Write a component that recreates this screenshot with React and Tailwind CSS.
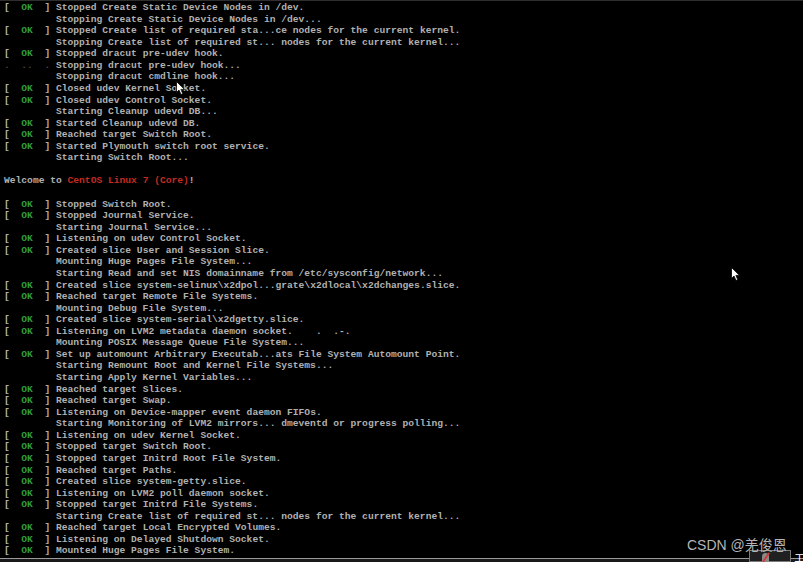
const lines = [
  { ok: true, text: "Stopped Create Static Device Nodes in /dev." },
  { text: "Stopping Create Static Device Nodes in /dev..." },
  { ok: true, text: "Stopped Create list of required sta...ce nodes for the current kernel." },
  { text: "Stopping Create list of required st... nodes for the current kernel..." },
  { ok: true, text: "Stopped dracut pre-udev hook." },
  { faded: true, text: "Stopping dracut pre-udev hook..." },
  { text: "Stopping dracut cmdline hook..." },
  { ok: true, text: "Closed udev Kernel Socket." },
  { ok: true, text: "Closed udev Control Socket." },
  { text: "Starting Cleanup udevd DB..." },
  { ok: true, text: "Started Cleanup udevd DB." },
  { ok: true, text: "Reached target Switch Root." },
  { ok: true, text: "Started Plymouth switch root service." },
  { text: "Starting Switch Root..." },
  { blank: true },
  { welcome: true },
  { blank: true },
  { ok: true, text: "Stopped Switch Root." },
  { ok: true, text: "Stopped Journal Service." },
  { text: "Starting Journal Service..." },
  { ok: true, text: "Listening on udev Control Socket." },
  { ok: true, text: "Created slice User and Session Slice." },
  { text: "Mounting Huge Pages File System..." },
  { text: "Starting Read and set NIS domainname from /etc/sysconfig/network..." },
  { ok: true, text: "Created slice system-selinux\\x2dpol...grate\\x2dlocal\\x2dchanges.slice." },
  { ok: true, text: "Reached target Remote File Systems." },
  { text: "Mounting Debug File System..." },
  { ok: true, text: "Created slice system-serial\\x2dgetty.slice." },
  { ok: true, text: "Listening on LVM2 metadata daemon socket.    .  .-." },
  { text: "Mounting POSIX Message Queue File System..." },
  { ok: true, text: "Set up automount Arbitrary Executab...ats File System Automount Point." },
  { text: "Starting Remount Root and Kernel File Systems..." },
  { text: "Starting Apply Kernel Variables..." },
  { ok: true, text: "Reached target Slices." },
  { ok: true, text: "Reached target Swap." },
  { ok: true, text: "Listening on Device-mapper event daemon FIFOs." },
  { text: "Starting Monitoring of LVM2 mirrors... dmeventd or progress polling..." },
  { ok: true, text: "Listening on udev Kernel Socket." },
  { ok: true, text: "Stopped target Switch Root." },
  { ok: true, text: "Stopped target Initrd Root File System." },
  { ok: true, text: "Reached target Paths." },
  { ok: true, text: "Created slice system-getty.slice." },
  { ok: true, text: "Listening on LVM2 poll daemon socket." },
  { ok: true, text: "Stopped target Initrd File Systems." },
  { text: "Starting Create list of required st... nodes for the current kernel..." },
  { ok: true, text: "Reached target Local Encrypted Volumes." },
  { ok: true, text: "Listening on Delayed Shutdown Socket." },
  { ok: true, text: "Mounted Huge Pages File System." },
]

function Cursor({ className }) {
  return (
    <svg className={className} width="10" height="15" viewBox="0 0 10 15">
      <path d="M0.5 0.5 L0.5 11.5 L3 9 L5 13.5 L6.8 12.7 L4.9 8.4 L8.5 8.4 Z" fill="#fff" stroke="#000" strokeWidth="0.8" />
    </svg>
  )
}

function Line({ line }) {
  if (line.blank) return <div className="h-[11.57px]" />
  if (line.welcome) {
    return (
      <div className="h-[11.57px] whitespace-pre">
        Welcome to <span className="text-[#c42a22]">CentOS Linux 7 (Core)</span>!
      </div>
    )
  }
  return (
    <div className="h-[11.57px] whitespace-pre">
      {line.ok ? (
        <>
          [  <span className="text-[#2f9e3a]">OK</span>  ] {line.text}
        </>
      ) : line.faded ? (
        <>
          <span className="opacity-40">.  ..  .</span> {line.text}
        </>
      ) : (
        <>{"         " + line.text}</>
      )}
    </div>
  )
}

export default function App() {
  return (
    <div className="w-[803px] h-[562px] bg-black relative overflow-hidden flex flex-col">
      <div className="h-[1px] bg-[#2e2e2e]" />
      <div
        className="h-[557px] pl-[4px] pt-[1px] text-[9.65px] leading-[11.57px] font-bold text-[#b0b0b0]"
        style={{ fontFamily: '"Liberation Mono", "DejaVu Sans Mono", monospace' }}
      >
        {lines.map((line, i) => (
          <Line key={i} line={line} />
        ))}
      </div>
      <div className="h-[1px] bg-[#9a9a9a]" />
      <div className="flex-1 bg-[#1a1a1a]" />

      <Cursor className="absolute left-[176px] top-[81px]" />
      <Cursor className="absolute left-[731px] top-[267px]" />

      <div className="absolute left-[749px] top-[550px] w-[42px] h-[12px] border border-[#7a7a7a] bg-[#202020] flex items-start pl-[12px] pt-[2px]">
        <div className="w-[7px] h-[9px] rounded-t-full bg-[#8a8a8a] relative">
          <div className="absolute left-[3px] -top-[1px] w-[2px] h-[11px] bg-[#d23b3b] rotate-[35deg]" />
        </div>
      </div>
      <div
        className="absolute left-[794px] top-[552px] text-[11px] text-white leading-none"
        style={{ fontFamily: '"Noto Sans CJK SC", sans-serif' }}
      >
        エ
      </div>

      <div
        className="absolute left-[687px] top-[536px] text-[14px] text-[#b5b5b5] leading-[18px]"
        style={{ fontFamily: '"Liberation Sans", "Noto Sans CJK SC", sans-serif' }}
      >
        CSDN @羌俊恩
      </div>
    </div>
  )
}
